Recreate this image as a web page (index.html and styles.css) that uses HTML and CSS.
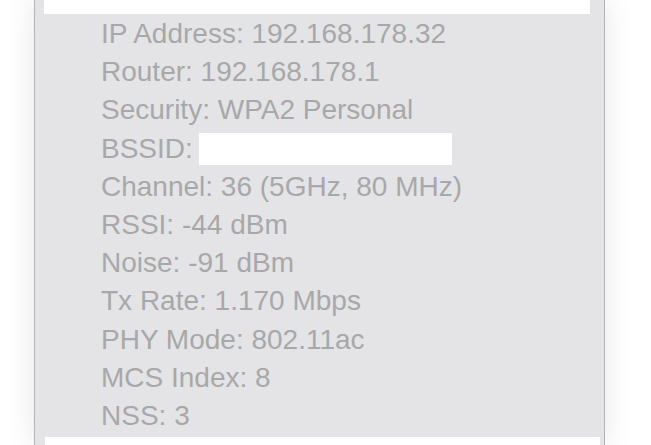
FILE: index.html
```html
<!DOCTYPE html>
<html lang="en">
<head>
    <meta charset="UTF-8">
    <meta name="viewport" content="width=device-width, initial-scale=1.0">
    <title>Wi-Fi Details</title>
    <link rel="stylesheet" href="styles.css">
</head>
<body>

    <div class="panel">
        <div class="item-top"></div>

        <ul class="details">
            <li>IP Address: 192.168.178.32</li>
            <li>Router: 192.168.178.1</li>
            <li>Security: WPA2 Personal</li>
            <li>BSSID: <span class="hidden-value"></span></li>
            <li>Channel: 36 (5GHz, 80 MHz)</li>
            <li>RSSI: -44 dBm</li>
            <li>Noise: -91 dBm</li>
            <li>Tx Rate: 1.170 Mbps</li>
            <li>PHY Mode: 802.11ac</li>
            <li>MCS Index: 8</li>
            <li>NSS: 3</li>
        </ul>

        <div class="item-bottom"></div>
    </div>

</body>
</html>
```

FILE: styles.css
```css
html, body {
    margin: 0;
    height: 100%;
    overflow: hidden;
    background: #ffffff;
}

body {
    font-family: "Liberation Sans", Arial, sans-serif;
}

.panel {
    margin-left: 34px;
    width: 569px;
    height: 445px;
    background: #e4e4e6;
    border-left: 1px solid #b3b3b5;
    border-right: 1px solid #b3b3b5;
    box-shadow: 0 0 28px rgba(0, 0, 0, 0.10);
}

/* white rows belonging to the neighbouring menu items */
.item-top {
    height: 14px;
    margin: 0 14px 0 9px;
    background: #ffffff;
}

.item-bottom {
    height: 8px;
    margin: 0 4px 0 10px;
    background: #ffffff;
}

.details {
    list-style: none;
    margin: 0;
    padding: 1px 0 0 66px;
    height: 422px;
    font-size: 28px;
    line-height: 38.2px;
    color: #a8a8aa;
}

.hidden-value {
    display: inline-block;
    width: 253px;
    height: 32px;
    margin-left: -2px;
    vertical-align: -7px;
    background: #ffffff;
}
```
